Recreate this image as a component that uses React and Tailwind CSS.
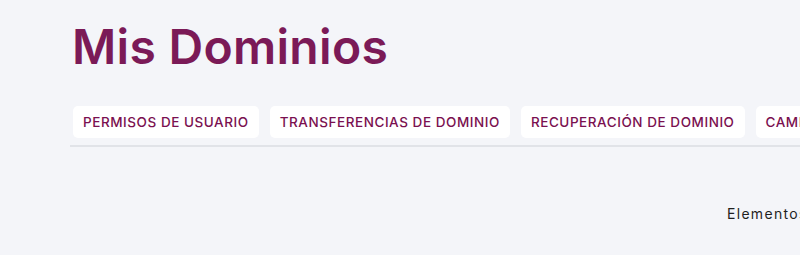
import React from 'react';

const tabs = [
  'PERMISOS DE USUARIO',
  'TRANSFERENCIAS DE DOMINIO',
  'RECUPERACIÓN DE DOMINIO',
  'CAMBIO DE TITULAR',
];

export default function App() {
  return (
    <div className="h-[255px] w-[800px] overflow-hidden bg-[#f4f5f9] font-['Inter',sans-serif]">
      <div className="pl-[70px] pt-[18px]">
        <h1 className="pl-[2px] text-[48px] font-semibold leading-[58px] tracking-[0.3px] text-[#7b1a57]">Mis Dominios</h1>

        {/* Tabs */}
        <div className="mt-[30px] border-b-2 border-[#e1e3e8] pb-[7px]">
          <div className="flex gap-[11px] whitespace-nowrap pl-[3px]">
            {tabs.map((t) => (
              <button
                key={t}
                className="h-[32px] shrink-0 rounded-[5px] bg-white px-[10px] text-[13.5px] font-medium tracking-[0.55px] text-[#7a1050]"
              >
                {t}
              </button>
            ))}
          </div>
        </div>

        <div className="mt-[56px] whitespace-nowrap pl-[657px] text-[14px] tracking-[1.3px] text-[#1f1f1f]">
          Elementos por página
        </div>
      </div>
    </div>
  );
}
